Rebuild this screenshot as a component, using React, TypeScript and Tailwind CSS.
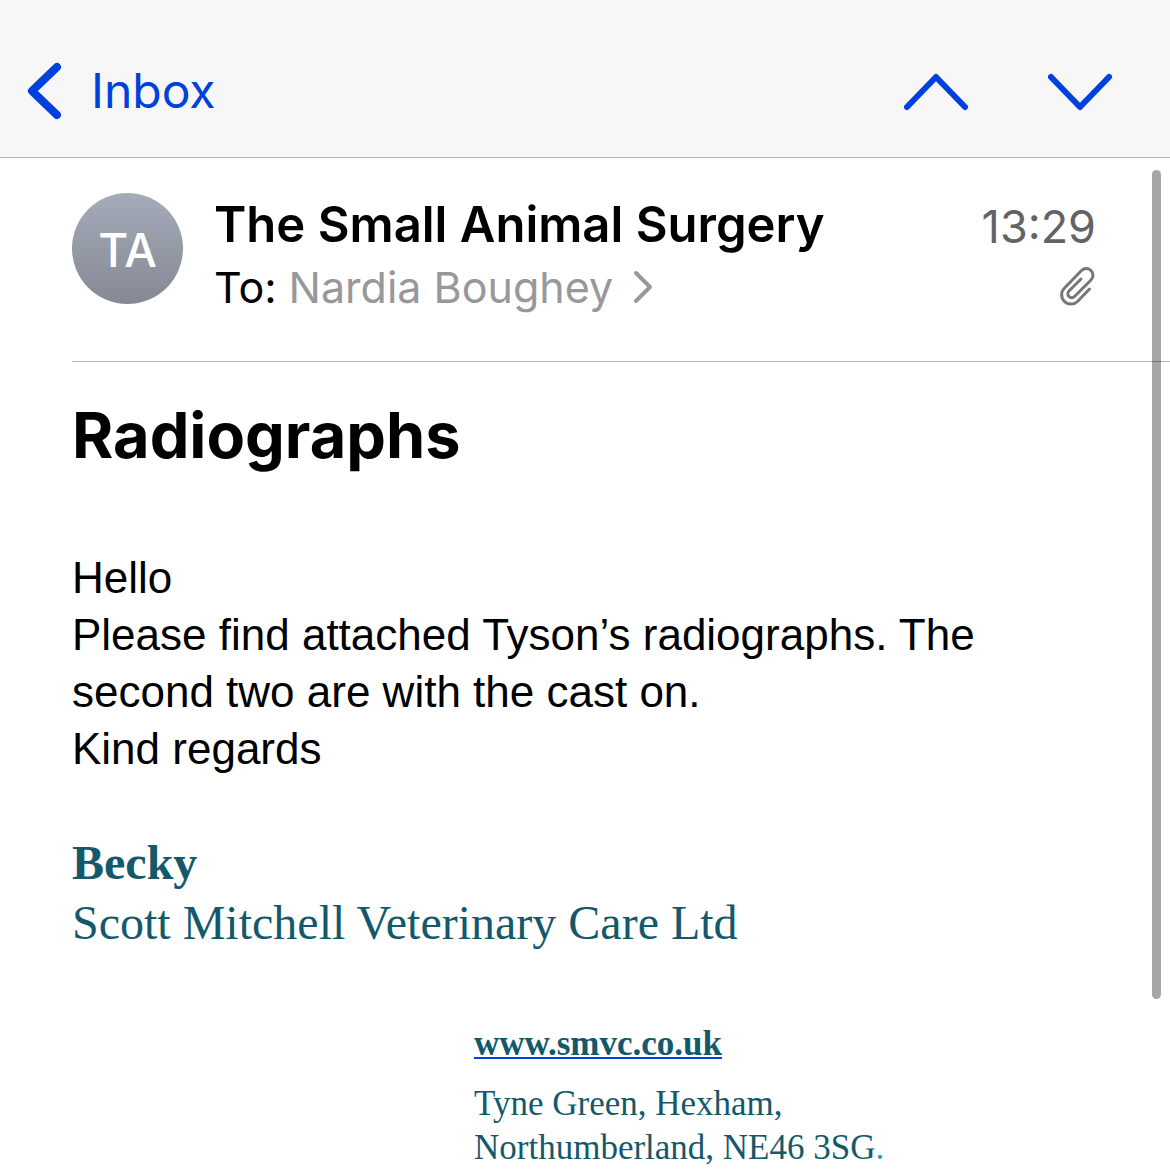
interface Message {
  sender: string;
  initials: string;
  recipient: string;
  time: string;
  subject: string;
  body: string[];
}

const message: Message = {
  sender: "The Small Animal Surgery",
  initials: "TA",
  recipient: "Nardia Boughey",
  time: "13:29",
  subject: "Radiographs",
  body: [
    "Hello",
    "Please find attached Tyson’s radiographs. The second two are with the cast on.",
    "Kind regards",
  ],
};

function NavBar() {
  return (
    <header className="flex items-center justify-between border-b border-[#b2b2b2] bg-[#f7f7f7] pt-[57px] pr-[56px] pb-8 pl-[26px]">
      <a href="#inbox" className="flex items-center gap-7 text-[48px] leading-[68px] text-[#0040dd]">
        <svg width="37" height="60" viewBox="0 0 37 60" fill="none" stroke="currentColor" strokeWidth="8" strokeLinecap="round" strokeLinejoin="round" aria-hidden="true">
          <path d="M31 6 6 30 31 54" />
        </svg>
        Inbox
      </a>
      <div className="flex items-center gap-[76px]">
        <button type="button" aria-label="Previous message" className="text-[#0040dd]">
          <svg width="68" height="40" viewBox="0 0 68 40" fill="none" stroke="currentColor" strokeWidth="6" strokeLinecap="round" strokeLinejoin="round">
            <path d="M5 36 34 6 63 36" />
          </svg>
        </button>
        <button type="button" aria-label="Next message" className="text-[#0040dd]">
          <svg width="68" height="40" viewBox="0 0 68 40" fill="none" stroke="currentColor" strokeWidth="6" strokeLinecap="round" strokeLinejoin="round">
            <path d="M5 6 34 36 63 6" />
          </svg>
        </button>
      </div>
    </header>
  );
}

function MessageHeader() {
  return (
    <section className="ml-[72px] flex gap-[31px] border-b border-[#b8b8ba] pt-[35px] pr-[74px] pb-11">
      <div className="flex size-[111px] shrink-0 items-center justify-center rounded-full bg-linear-to-b from-[#a5abb9] to-[#858994] pt-1 text-[46px] font-medium text-white">
        {message.initials}
      </div>
      <div className="min-w-0 flex-1">
        <div className="flex items-center justify-between">
          <h2 className="text-[49px] leading-[64px] font-semibold text-black">{message.sender}</h2>
          <time className="pt-1 text-[45px] leading-[60px] text-[#636366]">{message.time}</time>
        </div>
        <div className="flex items-center justify-between">
          <p className="flex items-center text-[43px] leading-[60px]">
            <span className="mr-3">To:</span>
            <a href="#contact" className="flex items-center gap-5 text-[#98989b]">
              {message.recipient}
              <svg width="20" height="34" viewBox="0 0 20 34" fill="none" stroke="currentColor" strokeWidth="4" strokeLinecap="round" strokeLinejoin="round" aria-hidden="true">
                <path d="M3 3 17 17 3 31" />
              </svg>
            </a>
          </p>
          <svg width="36" height="40" viewBox="0 0 36 40" fill="none" stroke="#77777b" strokeWidth="3" strokeLinecap="round" strokeLinejoin="round" role="img" aria-label="Attachment">
            <path d="M21 12 9 24a3.800 3.800 0 0 0 5.500 5.500L31 13a6.500 6.500 0 0 0-9.500-9.500L4.500 21a9.300 9.300 0 0 0 13 13.500L29.500 22" />
          </svg>
        </div>
      </div>
    </section>
  );
}

function Signature() {
  return (
    <footer className="mt-14 font-['Liberation_Serif',serif] text-[#13596b]">
      <p className="text-[48px] leading-[60px] font-bold">Becky</p>
      <p className="text-[48px] leading-[60px]">Scott Mitchell Veterinary Care Ltd</p>
      <address className="mt-[69px] ml-[402px] text-[35px] leading-[44px] not-italic">
        <a href="#website" className="font-bold underline decoration-[#0040dd] decoration-2 underline-offset-2 [text-decoration-skip-ink:none]">
          www.smvc.co.uk
        </a>
        <p className="mt-4">
          Tyne Green, Hexham,
          <br />
          Northumberland, NE46 3SG<span className="text-[#1f9cc4]">.</span>
        </p>
      </address>
    </footer>
  );
}

export default function App() {
  return (
    <div className="relative h-screen overflow-hidden bg-white font-[Inter,sans-serif] text-black">
      <NavBar />
      <MessageHeader />
      <main className="pt-[41px] pr-[72px] pl-[72px]">
        <h1 className="text-[63px] leading-[64px] font-bold">{message.subject}</h1>
        <div className="mt-[82px] font-['Liberation_Sans',sans-serif] text-[44px] leading-[57px]">
          {message.body.map((line) => (
            <p key={line}>{line}</p>
          ))}
        </div>
        <Signature />
      </main>
      {/* Scroll indicator */}
      <div className="absolute top-[170px] right-[9px] h-[829px] w-[9px] rounded-full bg-black/35" />
    </div>
  );
}
